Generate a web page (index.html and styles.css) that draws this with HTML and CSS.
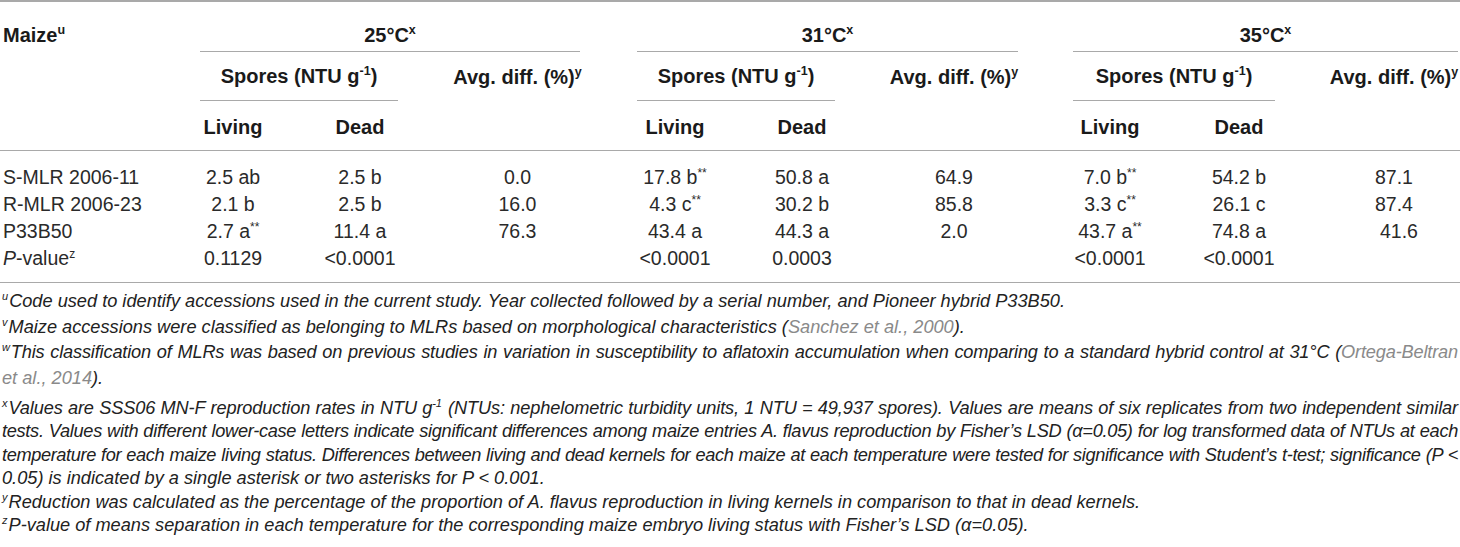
FILE: index.html
```html
<!DOCTYPE html>
<html lang="en">
<head>
<meta charset="utf-8">
<title>Maize table</title>
<link rel="stylesheet" href="styles.css">
</head>
<body>
<div class="tbl">
  <div class="thead grid">
    <div class="h-maize">Maize<sup class="hs">u</sup></div>
    <div class="h-temp t25">25°C<sup class="hs">x</sup></div>
    <div class="h-temp t31">31°C<sup class="hs">x</sup></div>
    <div class="h-temp t35">35°C<sup class="hs">x</sup></div>

    <div class="h-spores s25">Spores (NTU g<sup class="hs">-1</sup>)</div>
    <div class="h-avg a25">Avg. diff. (%)<sup class="hs">y</sup></div>
    <div class="h-spores s31">Spores (NTU g<sup class="hs">-1</sup>)</div>
    <div class="h-avg a31">Avg. diff. (%)<sup class="hs">y</sup></div>
    <div class="h-spores s35">Spores (NTU g<sup class="hs">-1</sup>)</div>
    <div class="h-avg a35 pad35">Avg. diff. (%)<sup class="hs">y</sup></div>

    <div class="h-sub live c2">Living</div>
    <div class="h-sub c3">Dead</div>
    <div class="h-sub live c5">Living</div>
    <div class="h-sub c6">Dead</div>
    <div class="h-sub live c8">Living</div>
    <div class="h-sub c9">Dead</div>
  </div>

  <div class="tbody grid">
    <div class="name">S-MLR 2006-11</div>
    <div class="live">2.5 ab</div>
    <div>2.5 b</div>
    <div>0.0</div>
    <div class="live">17.8 b<sup class="ds">**</sup></div>
    <div>50.8 a</div>
    <div>64.9</div>
    <div class="live">7.0 b<sup class="ds">**</sup></div>
    <div>54.2 b</div>
    <div class="pad35">87.1</div>

    <div class="name">R-MLR 2006-23</div>
    <div class="live">2.1 b</div>
    <div>2.5 b</div>
    <div>16.0</div>
    <div class="live">4.3 c<sup class="ds">**</sup></div>
    <div>30.2 b</div>
    <div>85.8</div>
    <div class="live">3.3 c<sup class="ds">**</sup></div>
    <div>26.1 c</div>
    <div class="pad35">87.4</div>

    <div class="name">P33B50</div>
    <div class="live">2.7 a<sup class="ds">**</sup></div>
    <div>11.4 a</div>
    <div>76.3</div>
    <div class="live">43.4 a</div>
    <div>44.3 a</div>
    <div>2.0</div>
    <div class="live">43.7 a<sup class="ds">**</sup></div>
    <div>74.8 a</div>
    <div class="pad35 r41">41.6</div>

    <div class="name"><i>P</i>-value<sup class="ds">z</sup></div>
    <div class="live">0.1129</div>
    <div>&lt;0.0001</div>
    <div></div>
    <div class="live">&lt;0.0001</div>
    <div>0.0003</div>
    <div></div>
    <div class="live">&lt;0.0001</div>
    <div>&lt;0.0001</div>
    <div class="pad35"></div>
  </div>

  <div class="notes">
    <p class="wide"><sup class="fs">u</sup>Code used to identify accessions used in the current study. Year collected followed by a serial number, and Pioneer hybrid P33B50.</p>
    <p class="wide"><sup class="fs">v</sup>Maize accessions were classified as belonging to MLRs based on morphological characteristics (<span class="ref">Sanchez et al., 2000</span>).</p>
    <p class="wide"><span class="jl c15"><sup class="fs">w</sup>This classification of MLRs was based on previous studies in variation in susceptibility to aflatoxin accumulation when comparing to a standard hybrid control at 31°C (<span class="ref">Ortega-Beltran</span></span><span class="ref">et al., 2014</span>).</p>
    <p class="first-narrow"><span class="jl c12"><sup class="fs">x</sup>Values are SSS06 MN-F reproduction rates in NTU g<sup class="fs">-1</sup> (NTUs: nephelometric turbidity units, 1 NTU = 49,937 spores). Values are means of six replicates from two independent similar</span><span class="jl c30">tests. Values with different lower-case letters indicate significant differences among maize entries A. flavus reproduction by Fisher’s LSD (α=0.05) for log transformed data of NTUs at each</span><span class="jl c40">temperature for each maize living status. Differences between living and dead kernels for each maize at each temperature were tested for significance with Student’s t-test; significance (P &lt;</span>0.05) is indicated by a single asterisk or two asterisks for P &lt; 0.001.</p>
    <p><sup class="fs">y</sup>Reduction was calculated as the percentage of the proportion of A. flavus reproduction in living kernels in comparison to that in dead kernels.</p>
    <p><sup class="fs">z</sup>P-value of means separation in each temperature for the corresponding maize embryo living status with Fisher’s LSD (α=0.05).</p>
  </div>
</div>
</body>
</html>
```

FILE: styles.css
```css
html, body {
  margin: 0;
  padding: 0;
  background: #ffffff;
}

body {
  width: 1460px;
  font-family: "Liberation Sans", Arial, sans-serif;
  color: #1e1e1e;
}

.tbl {
  border-top: 2px solid #a9a9a9;
}

.grid {
  display: grid;
  grid-template-columns: 200px 122px 76px 239px 132px 66px 238px 130px 72px 185px;
}

/* ---------- header ---------- */
.thead {
  font-weight: bold;
  font-size: 20px;
  line-height: 24px;
  color: #1a1a1a;
  border-bottom: 1px solid #a9a9a9;
  text-align: center;
}

.hs {
  font-size: 12.5px;
  line-height: 0;
  vertical-align: 8px;
}

.h-maize {
  grid-column: 1;
  grid-row: 1 / 4;
  text-align: left;
  padding: 21px 0 0 3px;
}

.h-temp {
  grid-row: 1;
  padding: 21px 0 4px;
  border-bottom: 1px solid #a9a9a9;
}
.t25 { grid-column: 2 / 5; margin-right: 57px; }
.t31 { grid-column: 5 / 8; margin-right: 55px; }
.t35 { grid-column: 8 / 11; margin-right: 2px; }

.h-spores {
  grid-row: 2;
  padding: 12px 0 12px;
  border-bottom: 1px solid #a9a9a9;
}
.s25 { grid-column: 2 / 4; }
.s31 { grid-column: 5 / 7; }
.s35 { grid-column: 8 / 10; }

.h-avg {
  grid-row: 2 / 4;
  align-self: start;
  padding-top: 13px;
}
.a25 { grid-column: 4; }
.a31 { grid-column: 7; }
.a35 { grid-column: 10; }

.h-sub {
  grid-row: 3;
  padding: 14px 0 11px;
}
.c2 { grid-column: 2; }
.c3 { grid-column: 3; }
.c5 { grid-column: 5; }
.c6 { grid-column: 6; }
.c8 { grid-column: 8; }
.c9 { grid-column: 9; }

.live { padding-right: 56px; }
.pad35 { padding-left: 53px; }

/* ---------- body ---------- */
.tbody {
  font-size: 19.5px;
  line-height: 27px;
  color: #2a2a2a;
  text-align: center;
  padding: 13px 0 10px;
  border-bottom: 1px solid #a9a9a9;
}

.tbody .name {
  text-align: left;
  padding-left: 3px;
}

.r41 { padding-left: 63px; }

.ds {
  font-size: 12px;
  line-height: 0;
  vertical-align: 7px;
}

/* ---------- notes ---------- */
.notes {
  font-style: italic;
  font-size: 18.2px;
  color: #222222;
  padding: 6px 2px 0 2px;
}

.notes p {
  margin: 0;
  line-height: 23.4px;
}

.notes p.wide {
  line-height: 25.5px;
}

.notes p.first-narrow {
  margin-top: 6px;
}

.fs {
  font-size: 11px;
  line-height: 0;
  vertical-align: 7px;
  margin-right: 1px;
}

.jl {
  display: block;
  text-align: justify;
  text-align-last: justify;
  white-space: nowrap;
}

.c12 { letter-spacing: -0.12px; }
.c15 { letter-spacing: -0.17px; }
.c30 { letter-spacing: -0.3px; }
.c40 { letter-spacing: -0.38px; }

.ref {
  color: #8a8a8a;
}
```
